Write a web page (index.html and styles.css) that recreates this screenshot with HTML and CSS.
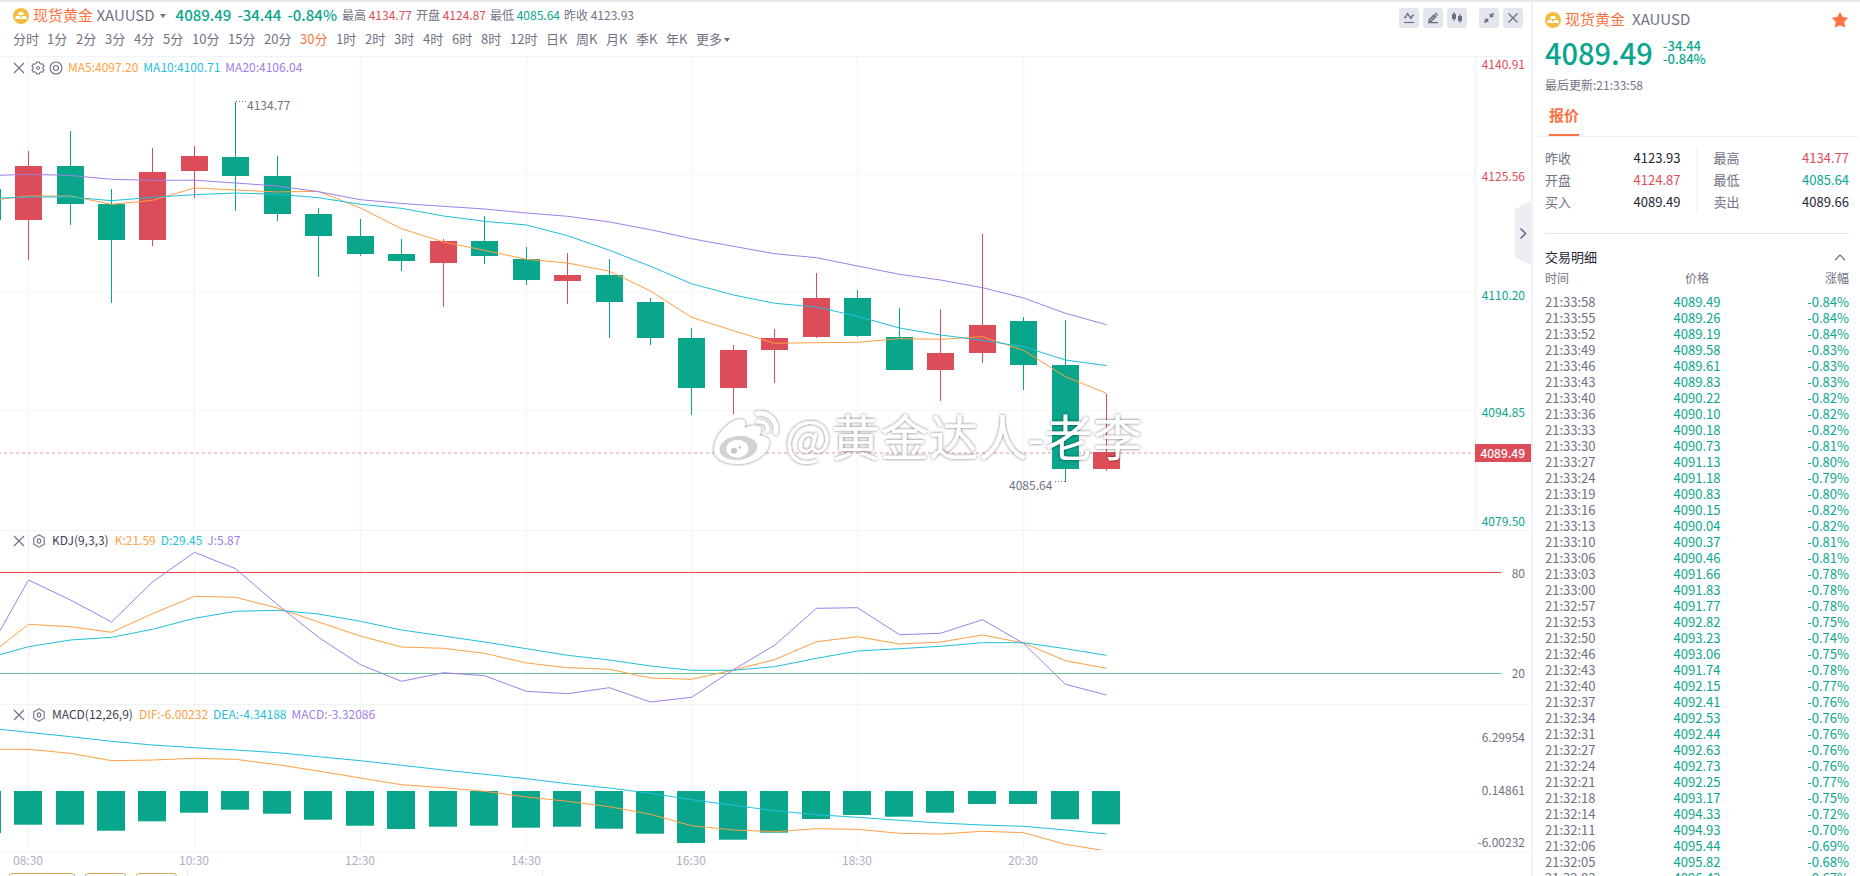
FILE: index.html
```html
<!DOCTYPE html>
<html lang="zh-CN">
<head>
<meta charset="utf-8">
<title>现货黄金 XAUUSD</title>
<link rel="stylesheet" href="styles.css">
</head>
<body>
<svg class="defs" aria-hidden="true">
  <symbol id="gold" viewBox="0 0 16 16"><circle cx="8" cy="8" r="8" fill="#f0bd41"/><path d="M6 4h4l1 3H5zM3 8h4l1 3H2zM9 8h4l1 3H8z" fill="#fff"/></symbol>
  <symbol id="cross" viewBox="0 0 12 12"><path d="M1 1l10 10M11 1L1 11" fill="none" stroke="#6b7080" stroke-width="1.1"/></symbol>
  <symbol id="hex" viewBox="0 0 14 14"><path d="M7 .8l5.200 3v6.400L7 13.200l-5.200-3V3.800z" fill="none" stroke="#6b7080" stroke-width="1.100"/><ellipse cx="7" cy="7" rx="1.700" ry="2.100" fill="none" stroke="#6b7080" stroke-width="1.100"/></symbol>
</svg>
<div class="app">
  <main class="board">
    <header class="head">
      <div class="head-info">
        <div class="quote">
          <svg class="coin"><use href="#gold"/></svg>
          <button class="symbol"><span class="accent">现货黄金</span> XAUUSD<i class="caret"></i></button>
          <div class="last down"><span>4089.49</span><span>-34.44</span><span>-0.84%</span></div>
          <div class="stats">
            <span>最高 <b class="up">4134.77</b></span>
            <span>开盘 <b class="up">4124.87</b></span>
            <span>最低 <b class="down">4085.64</b></span>
            <span>昨收 <b>4123.93</b></span>
          </div>
        </div>
        <nav class="periods">
          <button class="first">分时</button><button>1分</button><button>2分</button><button>3分</button><button>4分</button><button>5分</button><button class="two">10分</button><button class="two">15分</button><button class="two">20分</button><button class="two accent">30分</button><button>1时</button><button>2时</button><button>3时</button><button>4时</button><button>6时</button><button>8时</button><button class="two">12时</button><button class="day">日K</button><button class="day">周K</button><button class="day">月K</button><button class="day">季K</button><button class="day">年K</button><button class="more">更多<i class="caret small"></i></button>
        </nav>
      </div>
      <div class="tools">
        <button><svg viewBox="0 0 20 20"><path d="M5 9.500h1.500l2-4 3.500 5 1.500-3H15" fill="none" stroke="#6b7080" stroke-width="1.400"/><path d="M5 14.500h10" stroke="#6b7080" stroke-width="1.200"/></svg></button>
        <button><svg viewBox="0 0 20 20"><path d="M5.500 14.500v-3L11 6l2.700 2.700-5.500 5.500z" fill="#6b7080"/><path d="M11.600 5.400l1-.9 2.600 2.600-.9 1z" fill="#6b7080"/><path d="M7 12.700l4-4" stroke="#e4e6ee" stroke-width=".8"/><path d="M5 14.600h10" stroke="#6b7080" stroke-width="1.300"/></svg></button>
        <button><svg viewBox="0 0 20 20"><path d="M5 6h4v5H5zM11 8h4v5h-4z" fill="#6b7080"/><path d="M7 4v9M13 6v9" stroke="#6b7080" stroke-width="1.200"/></svg></button>
        <button class="gap"><svg viewBox="0 0 20 20"><path d="M10.700 5.200v4.100h4.100zM9.300 14.800v-4.100H5.200z" fill="#6b7080"/><path d="M14.500 5.500L11.500 8.500M5.500 14.500l3-3" stroke="#6b7080" stroke-width="1.800"/></svg></button>
        <button><svg viewBox="0 0 20 20"><path d="M5.500 5.500l9 9M14.500 5.500l-9 9" stroke="#6b7080" stroke-width="1.300"/></svg></button>
      </div>
    </header>

    <section class="panel panel-price">
      <svg class="plot" id="price"></svg>
      <div class="legend">
        <svg class="i-cross"><use href="#cross"/></svg>
        <svg class="i-round" viewBox="0 0 14 14"><path d="M5.600 1h2.800l.4 1.500 1.300.7 1.500-.4 1.400 2.400-1.100 1.100v1.400L13 8.800l-1.400 2.400-1.500-.4-1.300.7L8.400 13H5.600l-.4-1.500-1.300-.7-1.500.4L1 8.800l1.100-1.100V6.300L1 5.200l1.400-2.400 1.500.4 1.300-.7z" fill="none" stroke="#6b7080" stroke-width="1.100"/><circle cx="7" cy="7" r="1.500" fill="none" stroke="#6b7080"/></svg>
        <svg class="i-round" viewBox="0 0 14 14"><circle cx="7" cy="7" r="6" fill="none" stroke="#6b7080" stroke-width="1.100"/><circle cx="7" cy="7" r="2.500" fill="none" stroke="#6b7080" stroke-width="1.100"/></svg>
        <span class="c1">MA5:4097.20</span><span class="c2">MA10:4100.71</span><span class="c3">MA20:4106.04</span>
      </div>
      <button class="fold"><svg viewBox="0 0 16 64"><path d="M0 8L16 0v64L0 56z" fill="#ededf3"/><path d="M5.500 27.500l5 5-5 5" fill="none" stroke="#6b7080" stroke-width="1.600"/></svg></button>
    </section>

    <section class="panel panel-kdj">
      <svg class="plot" id="kdj"></svg>
      <div class="legend">
        <svg class="i-cross"><use href="#cross"/></svg>
        <svg class="i-hex"><use href="#hex"/></svg>
        <span class="name">KDJ(9,3,3)</span><span class="c1">K:21.59</span><span class="c2">D:29.45</span><span class="c3">J:5.87</span>
      </div>
    </section>

    <section class="panel panel-macd">
      <svg class="plot" id="macd"></svg>
      <div class="legend">
        <svg class="i-cross"><use href="#cross"/></svg>
        <svg class="i-hex"><use href="#hex"/></svg>
        <span class="name">MACD(12,26,9)</span><span class="c1">DIF:-6.00232</span><span class="c2">DEA:-4.34188</span><span class="c3">MACD:-3.32086</span>
      </div>
    </section>

    <section class="panel panel-time"><svg class="plot" id="time"></svg></section>
    <footer class="strip"><i class="chip wide"></i><i class="chip"></i><i class="chip"></i><i class="cell"></i></footer>
  </main>

  <aside class="side">
    <div class="side-title">
      <svg class="coin"><use href="#gold"/></svg>
      <span class="accent">现货黄金</span><span>XAUUSD</span>
      <button class="star"><svg viewBox="0 0 16 16"><path d="M8 .8l2.300 4.500 5 .9-3.500 3.600.7 5.100L8 12.700l-4.500 2.200.7-5.100L.7 6.200l5-.9z" fill="#ff7243" stroke="#ff7243" stroke-linejoin="round"/></svg></button>
    </div>
    <div class="side-price down"><strong>4089.49</strong><div class="delta"><span>-34.44</span><span>-0.84%</span></div></div>
    <div class="updated">最后更新:21:33:58</div>
    <div class="tabs"><button class="tab">报价</button></div>
    <div class="facts">
      <dl>
        <div><dt>昨收</dt><dd>4123.93</dd></div>
        <div><dt>开盘</dt><dd class="up">4124.87</dd></div>
        <div><dt>买入</dt><dd>4089.49</dd></div>
      </dl>
      <dl>
        <div><dt>最高</dt><dd class="up">4134.77</dd></div>
        <div><dt>最低</dt><dd class="down">4085.64</dd></div>
        <div><dt>卖出</dt><dd>4089.66</dd></div>
      </dl>
    </div>
    <div class="ticks">
      <h2>交易明细<svg viewBox="0 0 12 8"><path d="M1 7l5-5 5 5" fill="none" stroke="#6b7080" stroke-width="1.200"/></svg></h2>
      <table>
        <thead><tr><th>时间</th><th>价格</th><th>涨幅</th></tr></thead>
        <tbody id="ticks"></tbody>
      </table>
    </div>
  </aside>
</div>
<script src="chart.js"></script>
</body>
</html>
```

FILE: styles.css
```css
* { box-sizing: border-box; }
body {
  margin: 0;
  background: #fff;
  color: #6f7384;
  font-family: "Noto Sans CJK SC", "Noto Sans", sans-serif;
  font-size: 12px;
}
button { padding: 0; border: 0; background: none; font: inherit; color: inherit; }
svg { display: block; }
.defs { position: absolute; width: 0; height: 0; }
.accent { color: #ff7243; }
.up { color: #dc4d59; }
.down { color: #09a68c; }

.app {
  display: grid;
  grid-template-columns: 1fr 329px;
  height: 100vh;
  overflow: hidden;
  border-top: 2px solid #e4e9ec;
}
.board { min-width: 0; overflow: hidden; }

.head { display: flex; justify-content: space-between; height: 54px; padding: 0 8px 0 13px; }
.quote, .periods { display: flex; align-items: center; height: 24px; white-space: nowrap; }
.coin { width: 16px; height: 16px; margin-right: 4px; flex: none; }
.quote .coin { margin-top: 4px; }
.symbol { font-size: 15px; }
.caret { display: inline-block; margin-left: 5px; vertical-align: 3px; border: 3px solid transparent; border-top: 4px solid #6b7080; border-bottom: 0; }
.caret.small { margin-left: 2px; vertical-align: 2px; }
.last { display: flex; gap: 6px; margin: 0 5px 0 10px; font-size: 15px; font-weight: 500; }
.stats { display: flex; gap: 4px; }
.stats b { font-weight: 400; }
.periods { gap: 9px; font-size: 13px; }
.periods button { width: 20px; text-align: left; white-space: nowrap; }
.periods .first { width: 25px; }
.periods .two { width: 27px; }
.periods .day { width: 21px; }
.periods .more { width: auto; }
.periods .accent { color: #ff7243; }
.tools { display: flex; gap: 4px; padding-top: 6px; }
.tools button { width: 20px; height: 20px; border-radius: 3px; background: #e4e6ee; }
.tools .gap { margin-left: 8px; }

.panel { position: relative; border-top: 1px solid #f2f3f6; }
.panel-price { height: 474px; }
.panel-kdj { height: 174px; }
.panel-macd { height: 147px; }
.panel-time { height: 19px; }
.plot { position: absolute; top: -1px; left: 0; width: 100%; height: 100%; }
.plot text { font-size: 12px; fill: #6f7384; }
.plot .time { fill: #aeb1c1; }
.plot .tag { fill: #fff; font-weight: 500; }
.plot .mark { font-size: 49px; fill: #fff; }
.plot .axis.up { fill: #dc4d59; }
.plot .axis.down { fill: #09a68c; }
.legend { position: relative; display: flex; align-items: center; gap: 5px; height: 16px; padding-left: 13px; }
.panel-price .legend { margin-top: 1px; }
.legend svg { margin-top: 4px; }
.i-cross { width: 12px; height: 12px; margin-right: 2px; }
.i-round { width: 14px; height: 14px; margin-left: -1px; }
.i-hex { width: 14px; height: 14px; margin-right: 1px; }
.c1 { color: #ff9f43; }
.c2 { color: #1fbfdb; }
.c3 { color: #9d80e8; }
.name { color: #3c4150; margin-right: 1px; }
.fold { position: absolute; top: 144px; right: 0; width: 16px; height: 64px; }

.strip { display: flex; height: 40px; padding-left: 9px; gap: 10px; }
.chip { width: 41px; height: 20px; margin-top: 3px; border: 1px solid #dca75a; border-radius: 3px; }
.chip.wide { width: 66px; }
.cell { width: 356px; border: solid #ebedf1; border-width: 0 1px; }

.side { min-width: 0; overflow: hidden; border-left: 2px solid #f1f1f7; }
.side-title { display: flex; align-items: center; height: 24px; margin: 4px 12px 0 12px; font-size: 15px; }
.side-title .coin { margin-top: 3px; }
.side-title .accent { margin-right: 7px; }
.star { width: 16px; height: 16px; margin: 3px 0 0 auto; }
.side-price { display: flex; align-items: center; height: 44px; padding-left: 12px; }
.side-price strong { font-size: 29px; font-weight: 500; line-height: 44px; margin-right: 10px; }
.delta { display: flex; flex-direction: column; font-size: 13px; font-weight: 500; line-height: 13px; }
.updated { padding-left: 12px; margin-top: 2px; line-height: 18px; }
.tabs { height: 43px; margin: 0 2px 0 4px; padding-left: 12px; border-bottom: 1px solid #eff0f3; }
.tab { height: 42px; border-bottom: 2px solid #ff7243; color: #ff7243; font-size: 15px; font-weight: 700; }
.facts { display: flex; margin: 10px 11px 0 12px; padding-bottom: 20px; border-bottom: 1px solid #e3e5ea; font-size: 13px; line-height: 22px; }
.facts dl { flex: 1; margin: 0; }
.facts dl:first-child { padding-right: 15px; border-right: 2px solid #f4f5f8; }
.facts dl:last-child { padding-left: 16px; }
.facts dl div { display: flex; justify-content: space-between; }
.facts dd { margin: 0; color: #222632; }
.facts dd.up { color: #dc4d59; }
.facts dd.down { color: #09a68c; }
.ticks { margin: 12px 11px 0 12px; }
.ticks h2 { display: flex; align-items: center; justify-content: space-between; margin: 0; font-size: 13px; font-weight: 400; line-height: 22px; color: #222632; }
.ticks h2 svg { width: 12px; height: 8px; margin-right: 3px; }
.ticks table { width: 100%; border-collapse: collapse; table-layout: fixed; font-size: 13px; line-height: 16px; }
.ticks th { padding: 0 0 6px; font-size: 12px; font-weight: 400; line-height: 20px; }
.ticks td { padding: 0; text-align: center; color: #09a68c; }
.ticks td:first-child { color: #6f7384; }
.ticks tr > :first-child { text-align: left; }
.ticks tr > :last-child { text-align: right; }
```

FILE: chart.js
```js
const GREEN = "#09a68c", RED = "#dc4d59";
const ORANGE = "#ff9f43", CYAN = "#1fbfdb", PURPLE = "#9d80e8";
const xs = [28, 70, 111, 152, 194, 235, 277, 318, 360, 401, 443, 484, 526, 567, 609,
  650, 691, 733, 774, 816, 857, 899, 940, 982, 1023, 1065, 1106];
const hours = [[28, "08:30"], [194, "10:30"], [360, "12:30"], [526, "14:30"],
  [691, "16:30"], [857, "18:30"], [1023, "20:30"]];

// up flag, high, body top, body bottom, low
const candles = [
  [1,151,166,220,260],[0,131,166,204,225],[0,189,204,240,303],[1,148,172,240,246],
  [1,146,156,171,198],[0,102,157,176,211],[0,156,176,214,221],[0,208,214,236,277],
  [0,219,236,254,256],[0,239,254,261,271],[1,239,241,263,307],[0,216,241,256,264],
  [0,247,259,280,285],[1,253,275,281,304],[0,259,275,302,338],[0,298,302,338,345],
  [0,328,338,388,415],[1,345,350,388,414],[1,329,338,350,383],[1,273,298,337,338],
  [0,290,298,336,337],[0,308,337,370,370],[1,309,353,370,401],[1,234,325,353,363],
  [0,317,321,365,390],[0,320,365,469,482],[1,394,452,469,471]];

// each series starts at the left edge, then follows xs
const ma5 = [199.3,196,196,204.3,200.3,188,190,192,191.3,208,228.7,242,250.3,259.3,263,271.3,291,317.3,330.7,343.3,342.7,342.3,338.7,339.3,336.7,350.3,376.7,393.3];
const ma10 = [198,197,197,200.7,197.3,194.7,193,194.3,197.7,204.3,208.3,216,221.3,225,235.7,250.3,266.3,283.7,295,303.3,307,316.3,328,335,340.3,346.7,360,365.7];
const ma20 = [175.3,174.3,175.5,179.3,180.3,180.2,183,186,191.7,199.7,203.5,206.3,209,213,216.3,222,229.7,238.7,246.3,253.7,257.7,266,274.3,280,287.7,298,313.3,324.7];
const kLine = [646.7,624.3,626.7,632.3,613.7,596.3,597.3,608,622,636,647,648.3,653.3,663,667.7,669.3,678,679.3,670,659.7,641.7,636.7,644,642,635,643,660.7,668.3];
const dLine = [654.7,646.7,640,637.3,629.3,618.3,611.3,610.3,614,621.3,630,636,642,648.7,655.3,660,666,670.3,670.3,666.7,658.3,651,648.7,646.3,642.7,642.7,648.7,655.3];
const jLine = [630.7,580,600,622,582,552.3,568.7,604.7,637.3,664.7,681.3,672.7,675.7,691.3,693.7,687.7,702,697.3,669.7,645.3,608.3,607.7,634.7,633.3,619.7,643.3,684.3,695];
const dif = [749.3,749.3,753.3,760.7,760,758.3,759.3,764.7,771,778,784.7,787.7,791.3,797,801.3,806.7,814.3,825.7,830,831.7,828.7,829.3,833.3,834,831.3,832.7,844.3,851];
const dea = [729.3,732.3,736.7,741.3,745,747.7,750,752.7,756.7,760.7,765.3,770,774.3,778.7,783.7,788,793.3,799.7,805.3,810.7,814.7,817.3,820.3,823,825,826.3,830,834];
const bars = [824.7,824.7,830.7,821.3,812.7,809.7,813.7,819.7,825.7,829,826.7,825.7,827.7,826.7,828.7,833.7,843,839.7,832.7,819,815,816.7,812.7,804,804,819.3,824.3];

const line = (x1, y1, x2, y2, c, w = 1, extra = "") =>
  `<line x1="${x1}" y1="${y1}" x2="${x2}" y2="${y2}" stroke="${c}" stroke-width="${w}" ${extra}/>`;
const rect = (x, y, w, h, c) => `<rect x="${x}" y="${y}" width="${w}" height="${h}" fill="${c}"/>`;
const curve = (ys, c) =>
  `<polyline fill="none" stroke="${c}" stroke-width="1" points="${ys.map((y, i) => `${i ? xs[i - 1] + 0.5 : 0},${y}`).join(" ")}"/>`;
const axis = (y, t, cls = "") =>
  `<text class="${cls}" x="100%" dx="-6" y="${y}" text-anchor="end">${t}</text>`;
const grid = (y1, y2, c, w) => hours.map(([x]) => line(x + 0.5, y1, x + 0.5, y2, c, w)).join("");
const draw = (id, top, body) => {
  document.getElementById(id).innerHTML = `<g transform="translate(0,${-top})">${body}</g>`;
};

// The price scale takes the last 56px on the right.
const scaleLine = (y1, y2) => `<g style="transform:translateX(-56px)"><line x1="100%" x2="100%" y1="${y1}" y2="${y2}" stroke="#eff0f3" transform="translate(.5,0)"/></g>`;

const logo = `<g transform="translate(690,400) scale(.3333)" filter="url(#soft-logo)">
  <path fill="#fff" d="M73 142C78 102 118 62 148 58c17-1 21 12 16 26 18-9 42-12 48 1 3 9-1 15-4 22 18 2 31 8 30 22-3 31-42 62-93 63-46 0-78-19-72-50z"/>
  <ellipse cx="145" cy="144" rx="57" ry="36" transform="rotate(-7 145 144)" fill="#d2d2d2"/>
  <ellipse cx="142" cy="146" rx="33" ry="27" fill="#fff"/>
  <circle cx="132" cy="152" r="9" fill="#c6c6c6"/><circle cx="149" cy="142" r="4" fill="#c6c6c6"/>
  <path d="M202 40c32-4 62 22 55 58" fill="none" stroke="#fff" stroke-width="14" stroke-linecap="round"/>
  <path d="M204 65c18-3 33 10 28 28" fill="none" stroke="#fff" stroke-width="11" stroke-linecap="round"/></g>`;

draw("price", 56,
  `<filter id="soft" x="-10%" y="-10%" width="120%" height="125%"><feDropShadow dx="0" dy="0" stdDeviation="1.7" flood-color="#000" flood-opacity=".6"/></filter>` +
  `<filter id="soft-logo" x="-10%" y="-10%" width="120%" height="125%"><feDropShadow dx="0" dy="0" stdDeviation="5" flood-color="#000" flood-opacity=".6"/></filter>` +
  grid(56, 530, "#f8f8fb", 2) +
  `<g style="transform:translateX(-56px)">` +
  [174.5, 292.5, 410.5].map(y => line(0, y, "100%", y, "#f5f6f9")).join("") +
  line(0, 453, "100%", 453, "#f3c9cd", 2, 'stroke-dasharray="3 3"') + `</g>` +
  [174.5, 292.5, 410.5].map(y => line(0, y, 57, y, "#f5f6f9")).join("") +
  scaleLine(56, 530) +
  rect(0, 189, 1, 31, GREEN) +
  candles.map(([up, hi, a, b, lo], i) => {
    const c = up ? RED : GREEN;
    return rect(xs[i], hi, 1, lo - hi, c) + rect(xs[i] - 13, a, 27, b - a, c);
  }).join("") +
  curve(ma5, ORANGE) + curve(ma10, CYAN) + curve(ma20, PURPLE) +
  line(236, 101.5, 247, 101.5, "#6f7384", 1, 'stroke-dasharray="1 2"') +
  `<text x="247" y="110">4134.77</text>` +
  line(1055, 481.5, 1066, 481.5, "#6f7384", 1, 'stroke-dasharray="1 2"') +
  `<text x="1009" y="490">4085.64</text>` +
  axis(69, "4140.91", "axis up") + axis(181, "4125.56", "axis up") + axis(300, "4110.20", "axis down") +
  axis(417, "4094.85", "axis down") + axis(526, "4079.50", "axis down") +
  `<g style="transform:translateX(-56px)"><svg x="100%" y="444" width="56" height="18" overflow="visible">${rect(0, 0, 56, 18, RED)}</svg></g>` +
  axis(458, "4089.49", "tag") + logo +
  `<text class="mark" x="785" y="456" filter="url(#soft)">@黄金达人-老李</text>`);

draw("kdj", 530, grid(530, 704, "#f3f4f7", 1) +
  `<g style="transform:translateX(-30px)">` + line(0, 572.5, "100%", 572.5, "#e8404f") + line(0, 673.5, "100%", 673.5, "#5fc998") + `</g>` +
  line(0, 572.5, 31, 572.5, "#e8404f") + line(0, 673.5, 31, 673.5, "#5fc998") +
  curve(kLine, ORANGE) + curve(dLine, CYAN) + curve(jLine, PURPLE) +
  axis(578, "80") + axis(678, "20"));

draw("macd", 704, grid(704, 851, "#f3f4f7", 1) +
  rect(0, 791, 1, 42, GREEN) +
  bars.map((b, i) => rect(xs[i] - 14, 791, 28, b - 791, GREEN)).join("") +
  curve(dif, ORANGE) + curve(dea, CYAN) +
  axis(742, "6.29954") + axis(795, "0.14861") + axis(847, "-6.00232"));

draw("time", 851, hours.map(([x, t]) =>
  `<text class="time" x="${x}" y="865" text-anchor="middle">${t}</text>`).join(""));

const ticks = `33:58 89.49 84|33:55 89.26 84|33:52 89.19 84|33:49 89.58 83|33:46 89.61 83|33:43 89.83 83
33:40 90.22 82|33:36 90.10 82|33:33 90.18 82|33:30 90.73 81|33:27 91.13 80|33:24 91.18 79
33:19 90.83 80|33:16 90.15 82|33:13 90.04 82|33:10 90.37 81|33:06 90.46 81|33:03 91.66 78
33:00 91.83 78|32:57 91.77 78|32:53 92.82 75|32:50 93.23 74|32:46 93.06 75|32:43 91.74 78
32:40 92.15 77|32:37 92.41 76|32:34 92.53 76|32:31 92.44 76|32:27 92.63 76|32:24 92.73 76
32:21 92.25 77|32:18 93.17 75|32:14 94.33 72|32:11 94.93 70|32:06 95.44 69|32:05 95.82 68|32:03 96.42 67`;
document.getElementById("ticks").innerHTML = ticks.split(/[|\n]/).map(r => {
  const [t, p, d] = r.split(" ");
  return `<tr><td>21:${t}</td><td>40${p}</td><td>-0.${d}%</td></tr>`;
}).join("");
```
